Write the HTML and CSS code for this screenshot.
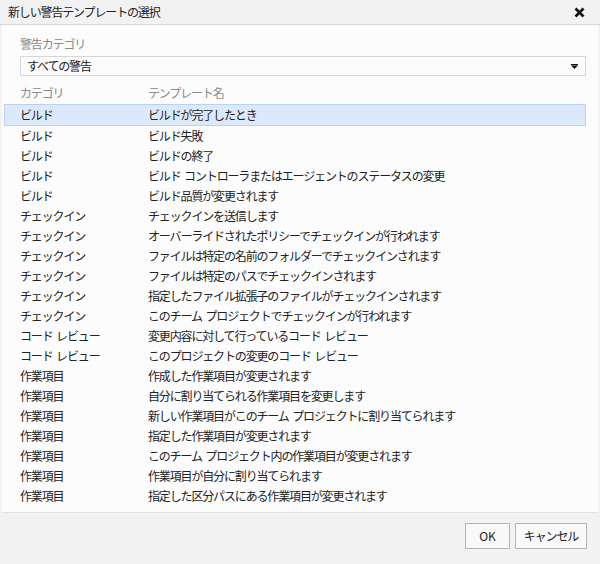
FILE: index.html
```html
<!DOCTYPE html>
<html lang="ja">
<head>
<meta charset="utf-8">
<link rel="stylesheet" href="styles.css">
</head>
<body>
<div class="dialog">
  <div class="titlebar">
    <span class="title">新しい警告テンプレートの選択</span>
    <svg class="close" width="11" height="11" viewBox="0 0 11 11"><path d="M1.5 1.5 L9.5 9.5 M9.5 1.5 L1.5 9.5" stroke="#111" stroke-width="2.6" stroke-linecap="butt"/></svg>
  </div>
  <div class="content">
    <div class="label">警告カテゴリ</div>
    <div class="select">
      <span>すべての警告</span>
      <svg class="arrow" width="7" height="5" viewBox="0 0 7 5"><rect x="0" y="0" width="7" height="1.2" fill="#111"/><path d="M0 1.6 L7 1.6 L3.5 5 Z" fill="#111"/></svg>
    </div>
    <div class="grid">
      <div class="row head"><span class="c1">カテゴリ</span><span class="c2">テンプレート名</span></div>
      <div class="row sel"><span class="c1">ビルド</span><span class="c2">ビルドが完了したとき</span></div>
      <div class="row"><span class="c1">ビルド</span><span class="c2">ビルド失敗</span></div>
      <div class="row"><span class="c1">ビルド</span><span class="c2">ビルドの終了</span></div>
      <div class="row"><span class="c1">ビルド</span><span class="c2">ビルド コントローラまたはエージェントのステータスの変更</span></div>
      <div class="row"><span class="c1">ビルド</span><span class="c2">ビルド品質が変更されます</span></div>
      <div class="row"><span class="c1">チェックイン</span><span class="c2">チェックインを送信します</span></div>
      <div class="row"><span class="c1">チェックイン</span><span class="c2">オーバーライドされたポリシーでチェックインが行われます</span></div>
      <div class="row"><span class="c1">チェックイン</span><span class="c2">ファイルは特定の名前のフォルダーでチェックインされます</span></div>
      <div class="row"><span class="c1">チェックイン</span><span class="c2">ファイルは特定のパスでチェックインされます</span></div>
      <div class="row"><span class="c1">チェックイン</span><span class="c2">指定したファイル拡張子のファイルがチェックインされます</span></div>
      <div class="row"><span class="c1">チェックイン</span><span class="c2">このチーム プロジェクトでチェックインが行われます</span></div>
      <div class="row"><span class="c1">コード レビュー</span><span class="c2">変更内容に対して行っているコード レビュー</span></div>
      <div class="row"><span class="c1">コード レビュー</span><span class="c2">このプロジェクトの変更のコード レビュー</span></div>
      <div class="row"><span class="c1">作業項目</span><span class="c2">作成した作業項目が変更されます</span></div>
      <div class="row"><span class="c1">作業項目</span><span class="c2">自分に割り当てられる作業項目を変更します</span></div>
      <div class="row"><span class="c1">作業項目</span><span class="c2">新しい作業項目がこのチーム プロジェクトに割り当てられます</span></div>
      <div class="row"><span class="c1">作業項目</span><span class="c2">指定した作業項目が変更されます</span></div>
      <div class="row"><span class="c1">作業項目</span><span class="c2">このチーム プロジェクト内の作業項目が変更されます</span></div>
      <div class="row"><span class="c1">作業項目</span><span class="c2">作業項目が自分に割り当てられます</span></div>
      <div class="row"><span class="c1">作業項目</span><span class="c2">指定した区分パスにある作業項目が変更されます</span></div>
    </div>
  </div>
  <div class="footer">
    <button class="btn ok">OK</button>
    <button class="btn cancel">キャンセル</button>
  </div>
</div>
</body>
</html>
```
FILE: styles.css
```css
html, body {
  margin: 0;
  padding: 0;
}
body {
  width: 600px;
  height: 564px;
  overflow: hidden;
  background: #f2f2f2;
  font-family: "Noto Sans CJK JP", "Noto Sans", sans-serif;
  font-size: 12px;
  letter-spacing: -1.15px;
  word-spacing: 2px;
  color: #222;
}
.dialog {
  display: flex;
  flex-direction: column;
  height: 564px;
}
.titlebar {
  height: 24px;
  display: flex;
  align-items: center;
  justify-content: space-between;
  padding: 0 15px 0 8px;
  border-bottom: 1px solid #d8d8d8;
  background: #f2f2f2;
}
.title {
  font-size: 12px;
  color: #222;
  line-height: 24px;
}
.close {
  margin-top: 1px;
}
.content {
  margin: 0 2px;
  background: #fcfcfc;
  border-bottom: 1px solid #e2e2e2;
  padding: 11px 12px 7px 2px;
  height: 488px;
  box-sizing: border-box;
}
.label {
  color: #8a8a8a;
  padding-left: 16px;
  line-height: 16px;
}
.select {
  margin: 4px 0 0 16px;
  height: 20px;
  box-sizing: border-box;
  border: 1px solid #d6d6d6;
  background: #fcfcfc;
  display: flex;
  align-items: center;
  justify-content: space-between;
  padding: 0 7px 0 6px;
  line-height: 18px;
}
.arrow {
  margin-top: 1px;
}
.grid {
  margin-top: 7px;
}
.row {
  display: flex;
  height: 20px;
  line-height: 18px;
  box-sizing: border-box;
  border: 1px solid transparent;
  padding-left: 15px;
  white-space: nowrap;
}
.row.head {
  color: #8a8a8a;
  height: 20px;
  margin-bottom: 1px;
}
.row.sel {
  background: #dce9fa;
  border-color: #b6d3f7;
  height: 22px;
  line-height: 20px;
}
.c1 {
  width: 128px;
  flex: none;
}
.c2 {
  flex: 1;
}
.footer {
  flex: 1;
  display: flex;
  justify-content: flex-end;
  align-items: flex-start;
  gap: 5px;
  padding: 10px 13px 0 0;
}
.btn {
  height: 26px;
  border: 1px solid #b5b5b5;
  background: #f9f9f9;
  font-family: "Noto Sans CJK JP", "Noto Sans", sans-serif;
  font-size: 12px;
  letter-spacing: -1.1px;
  color: #222;
  padding: 0;
  line-height: 24px;
}
.ok {
  width: 45px;
  letter-spacing: 0;
}
.cancel {
  width: 72px;
}
```
